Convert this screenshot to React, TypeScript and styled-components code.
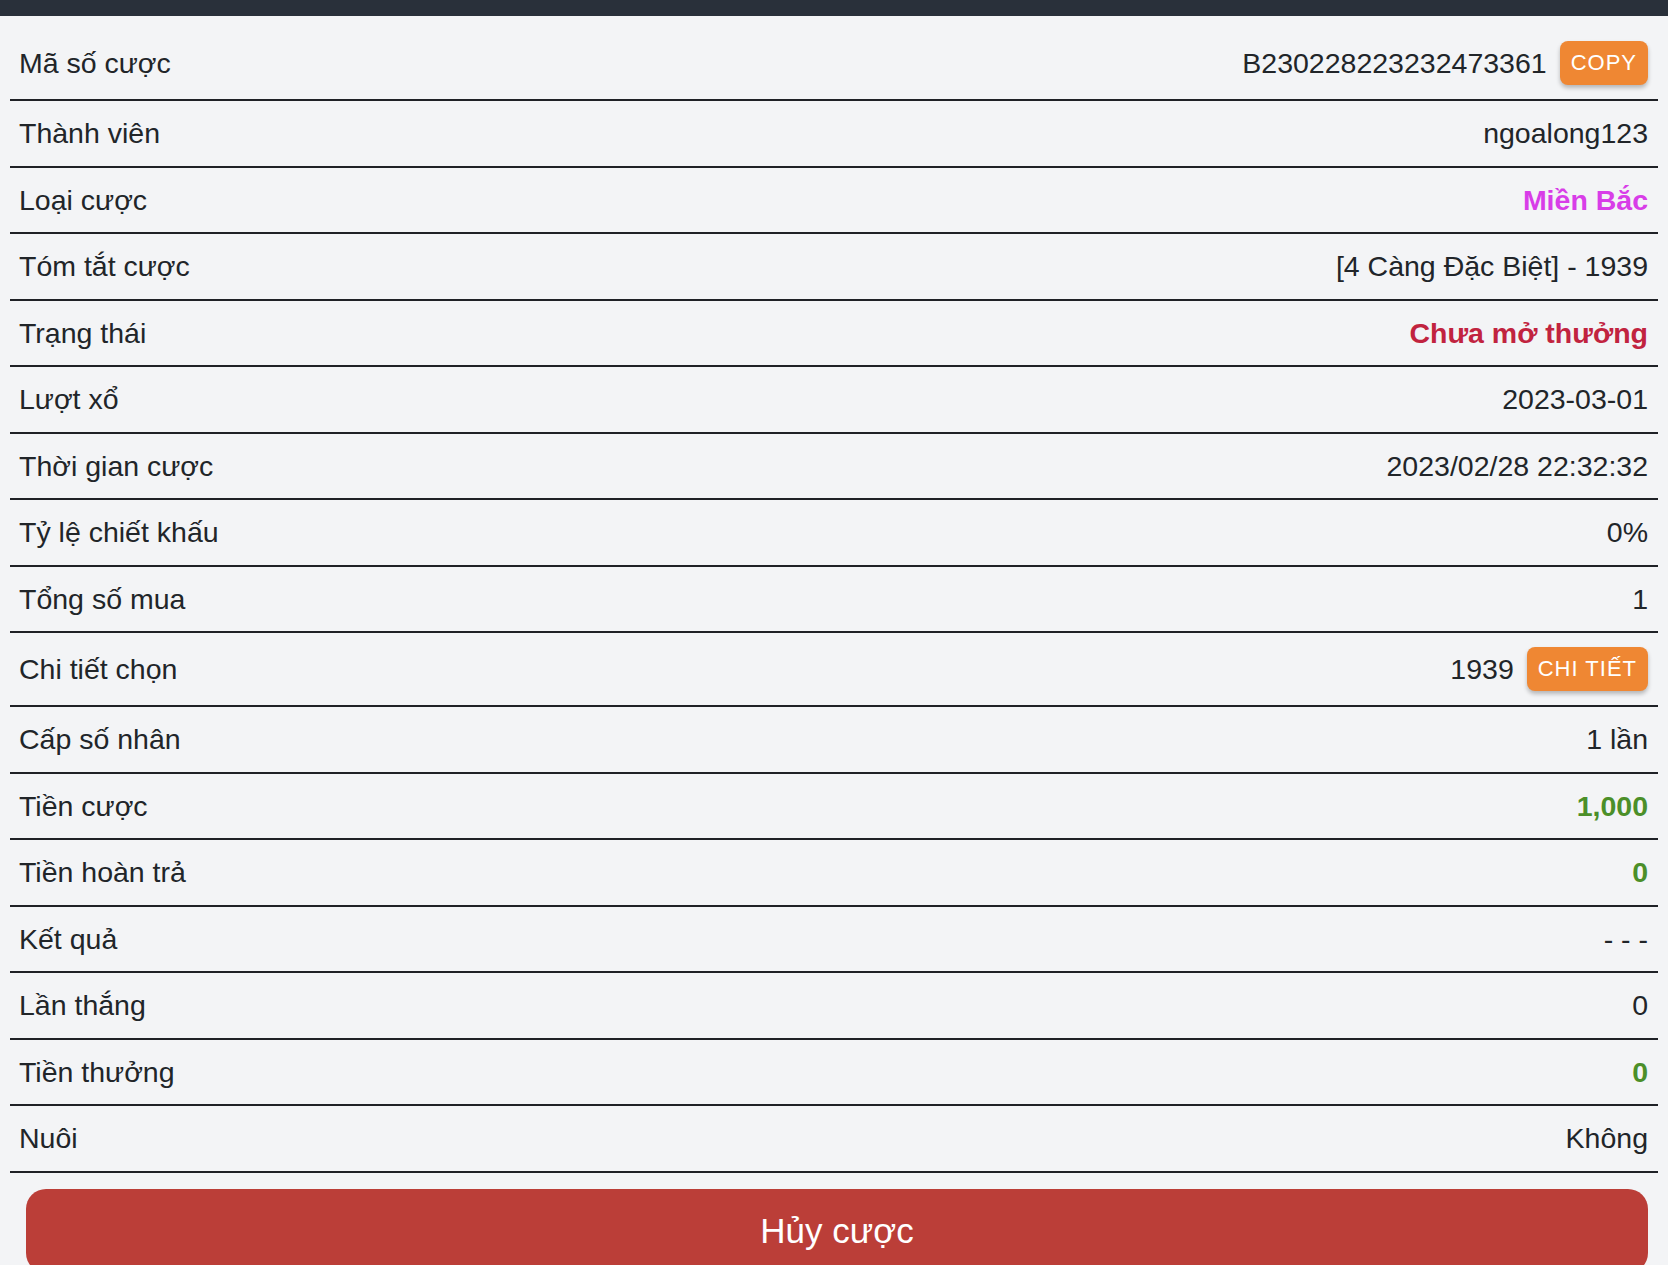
import styled, { createGlobalStyle } from 'styled-components';

const GlobalStyle = createGlobalStyle`
    html, body {
        margin: 0;
        padding: 0;
        background: #f3f4f6;
        font-family: "Liberation Sans", Arial, Helvetica, sans-serif;
        color: #212529;
    }
`;

const TopBar = styled.div`
    height: 16px;
    background: #29303a;
`;

const Page = styled.div`
    background: #f3f4f6;
    min-height: 1249px;
`;

const List = styled.div`
    padding: 11px 10px 0;
`;

const Row = styled.div`
    display: flex;
    align-items: center;
    justify-content: space-between;
    min-height: 64.5px;
    padding: 14px 10px 14px 9px;
    box-sizing: border-box;
    border-bottom: 2px solid #1f2126;
    font-size: 28.5px;
    line-height: 36.5px;
`;

const Label = styled.span`
    color: #212529;
`;

type Tone = 'plain' | 'magenta' | 'red' | 'green';

const toneColor: Record<Tone, string> = {
    plain: '#212529',
    magenta: '#d83de8',
    red: '#c1233f',
    green: '#4b8f29',
};

const Value = styled.span<{ $tone: Tone }>`
    display: flex;
    align-items: center;
    gap: 13px;
    color: ${(p) => toneColor[p.$tone]};
    font-weight: ${(p) => (p.$tone === 'plain' ? 400 : 700)};
`;

const SmallButton = styled.button`
    height: 44px;
    padding: 0 11px;
    border: none;
    border-radius: 8px;
    background: #ef8733;
    color: #fff;
    font-family: inherit;
    font-size: 22px;
    letter-spacing: 1px;
    box-shadow: 0 3px 4px rgba(0, 0, 0, 0.25);
    cursor: pointer;
`;

const CancelButton = styled.button`
    display: block;
    width: calc(100% - 46px);
    height: 84px;
    margin: 16px 20px 0 26px;
    border: none;
    border-radius: 20px;
    background: #bb3e38;
    color: #fff;
    font-family: inherit;
    font-size: 35px;
    cursor: pointer;
`;

type Item = {
    label: string;
    value: string;
    tone?: Tone;
    action?: string;
};

const items: Item[] = [
    { label: 'Mã số cược', value: 'B230228223232473361', action: 'COPY' },
    { label: 'Thành viên', value: 'ngoalong123' },
    { label: 'Loại cược', value: 'Miền Bắc', tone: 'magenta' },
    { label: 'Tóm tắt cược', value: '[4 Càng Đặc Biệt] - 1939' },
    { label: 'Trạng thái', value: 'Chưa mở thưởng', tone: 'red' },
    { label: 'Lượt xổ', value: '2023-03-01' },
    { label: 'Thời gian cược', value: '2023/02/28 22:32:32' },
    { label: 'Tỷ lệ chiết khấu', value: '0%' },
    { label: 'Tổng số mua', value: '1' },
    { label: 'Chi tiết chọn', value: '1939', action: 'CHI TIẾT' },
    { label: 'Cấp số nhân', value: '1 lần' },
    { label: 'Tiền cược', value: '1,000', tone: 'green' },
    { label: 'Tiền hoàn trả', value: '0', tone: 'green' },
    { label: 'Kết quả', value: '- - -' },
    { label: 'Lần thắng', value: '0' },
    { label: 'Tiền thưởng', value: '0', tone: 'green' },
    { label: 'Nuôi', value: 'Không' },
];

const App = () => {
    return (
        <>
            <GlobalStyle />
            <TopBar />
            <Page>
                <List>
                    {items.map((item) => (
                        <Row key={item.label}>
                            <Label>{item.label}</Label>
                            <Value $tone={item.tone ?? 'plain'}>
                                {item.value}
                                {item.action && (
                                    <SmallButton type="button">
                                        {item.action}
                                    </SmallButton>
                                )}
                            </Value>
                        </Row>
                    ))}
                </List>
                <CancelButton type="button">Hủy cược</CancelButton>
            </Page>
        </>
    );
};

export default App;
